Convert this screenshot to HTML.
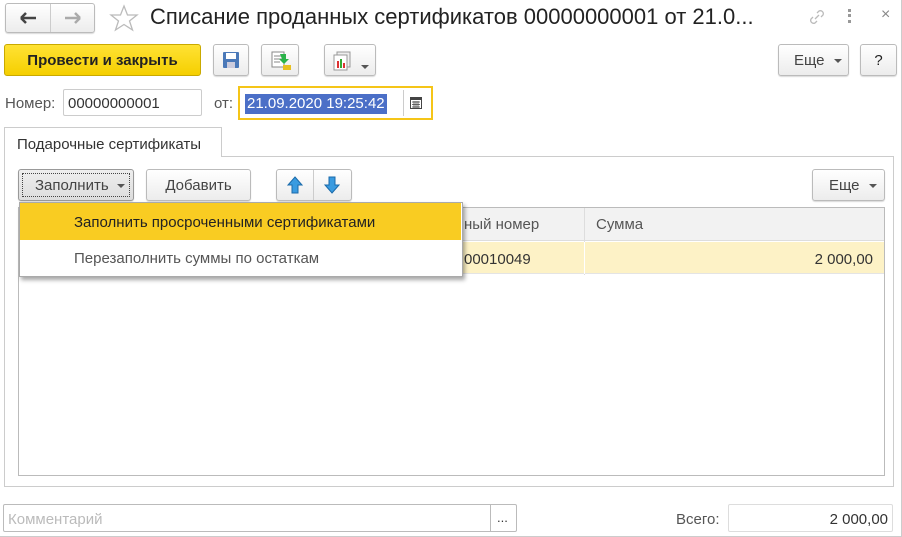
<!DOCTYPE html>
<html><head><meta charset="utf-8"><style>
*{box-sizing:border-box;margin:0;padding:0}
body{width:902px;height:537px;background:#fff;font-family:"Liberation Sans",Arial,sans-serif;position:relative;overflow:hidden;color:#333;font-size:14px}
.a{position:absolute}
.btn{position:absolute;border:1px solid #bbb;border-radius:3px;background:linear-gradient(#fff,#ececec);box-shadow:0 1px 1px rgba(0,0,0,.15);}
.tri{display:inline-block;width:0;height:0;border-left:4px solid transparent;border-right:4px solid transparent;border-top:4px solid #555;vertical-align:middle}
</style></head><body>
<div class="a" style="left:0;top:0;width:902px;height:537px;border-right:1px solid #ccc;border-bottom:1px solid #ccc"></div>
<!-- nav -->
<div class="btn" style="left:5px;top:3px;width:90px;height:30px"></div>
<div class="a" style="left:50px;top:4px;width:1px;height:28px;background:#ccc"></div>
<svg class="a" style="left:19px;top:11px" width="18" height="14"><path d="M2 7H17M2 7L7 2M2 7L7 12" stroke="#444" stroke-width="2.5" fill="none"/></svg>
<svg class="a" style="left:64px;top:11px" width="18" height="14"><path d="M16 7H1M16 7L11 2M16 7L11 12" stroke="#aaa" stroke-width="2.5" fill="none"/></svg>
<svg class="a" style="left:109px;top:4px" width="30" height="28"><polygon points="15,2 18.5,11 28,11 20.5,17 23.5,26 15,20.5 6.5,26 9.5,17 2,11 11.5,11" fill="none" stroke="#bbb" stroke-width="1.3"/></svg>
<div class="a" style="left:150px;top:4px;font-size:22px;color:#222;white-space:nowrap">Списание проданных сертификатов 00000000001 от 21.0...</div>
<svg class="a" style="left:808px;top:8px" width="18" height="18"><path d="M7 11L11 7M5 9L3 11a3 3 0 0 0 4 4l2-2M13 9l2-2a3 3 0 0 0-4-4L9 5" stroke="#bbb" stroke-width="1.3" fill="none"/></svg>
<div class="a" style="left:848px;top:9px;width:3px;height:14px;border-left:3px dotted #999"></div>
<div class="a" style="left:881px;top:6px;font-size:16px;color:#888">×</div>
<!-- toolbar -->
<div class="a" style="left:4px;top:44px;width:197px;height:32px;background:linear-gradient(#ffe234,#f5cf00);border:1px solid #c9a900;border-radius:3px;font-weight:bold;font-size:15px;color:#222;text-align:center;line-height:31px">Провести и закрыть</div>
<div class="btn" style="left:213px;top:44px;width:36px;height:32px"></div>
<svg class="a" style="left:222px;top:51px" width="18" height="18"><rect x="1" y="1" width="16" height="16" rx="1" fill="#4a78b8"/><rect x="4" y="2" width="10" height="6" fill="#fff"/><rect x="5" y="11" width="8" height="6" fill="#ccd"/></svg>
<div class="btn" style="left:261px;top:44px;width:38px;height:32px"></div>
<svg class="a" style="left:270px;top:50px" width="22" height="22"><rect x="2" y="2" width="12" height="15" fill="#fff" stroke="#888"/><path d="M4 6h8M4 9h8M4 12h6" stroke="#888"/><path d="M10 4h6v5h3l-5 5-5-5h3z" fill="#2bb34a"/><ellipse cx="17" cy="17" rx="4" ry="2" fill="#e8c020"/><rect x="13" y="15" width="8" height="5" fill="#e8c020"/></svg>
<div class="btn" style="left:324px;top:44px;width:52px;height:32px"></div>
<svg class="a" style="left:332px;top:51px" width="22" height="20"><rect x="5" y="1" width="13" height="15" fill="#eee" stroke="#999"/><rect x="2" y="4" width="13" height="15" fill="#fff" stroke="#999"/><rect x="5" y="10" width="2" height="7" fill="#d33"/><rect x="8" y="8" width="2" height="9" fill="#3a3"/><rect x="11" y="12" width="2" height="5" fill="#d33"/></svg>
<div class="a" style="left:361px;top:58px"><span class="tri"></span></div>
<div class="btn" style="left:778px;top:44px;width:71px;height:32px;line-height:32px;padding-left:15px;font-size:15px;color:#444">Еще <span class="tri" style="margin-left:5px"></span></div>
<div class="btn" style="left:860px;top:44px;width:37px;height:32px;text-align:center;line-height:32px;font-size:15px;color:#222">?</div>
<!-- fields -->
<div class="a" style="left:5px;top:95px;font-size:15px;color:#555">Номер:</div>
<div class="a" style="left:63px;top:89px;width:139px;height:27px;border:1px solid #ccc;border-radius:2px;padding:5px 4px;font-size:15px;color:#333">00000000001</div>
<div class="a" style="left:214px;top:95px;font-size:15px;color:#555">от:</div>
<div class="a" style="left:238px;top:86px;width:195px;height:34px;border:2px solid #f5c518"></div>
<div class="a" style="left:245px;top:94px;background:#4b6fc7;color:#fff;font-size:15px;padding:0 2px;line-height:20px">21.09.2020 19:25:42</div>
<div class="a" style="left:403px;top:90px;width:1px;height:26px;background:#ccc"></div>
<svg class="a" style="left:410px;top:96px" width="12" height="13"><rect x="0.5" y="1.5" width="11" height="11" fill="none" stroke="#444"/><rect x="0" y="1" width="12" height="3" fill="#444"/><path d="M2 6h8M2 8.5h8M2 11h8M4 5v7M6 5v7M8 5v7" stroke="#444" stroke-width=".8"/></svg>
<!-- tab -->
<div class="a" style="left:4px;top:156px;width:890px;height:331px;border:1px solid #ccc"></div>
<div class="a" style="left:4px;top:127px;width:218px;height:30px;border:1px solid #ccc;border-bottom:none;background:#fff;padding:8px 12px 0;font-size:15px;color:#333">Подарочные сертификаты</div>
<div class="btn" style="left:18px;top:169px;width:116px;height:32px;background:linear-gradient(#eee,#ddd);border-color:#999"></div>
<div class="a" style="left:22px;top:173px;width:108px;height:24px;border:1px dotted #444;line-height:24px;padding-left:12px;font-size:15px;color:#444">Заполнить <span class="tri" style="margin-left:4px"></span></div>
<div class="btn" style="left:146px;top:169px;width:105px;height:32px;text-align:center;line-height:32px;font-size:15px;color:#444">Добавить</div>
<div class="btn" style="left:276px;top:169px;width:76px;height:32px"></div>
<div class="a" style="left:313px;top:170px;width:1px;height:30px;background:#ccc"></div>
<svg class="a" style="left:287px;top:176px" width="16" height="18"><path d="M8 1L15 9H11V17H5V9H1Z" fill="#3a9be0" stroke="#1a6aaa"/></svg>
<svg class="a" style="left:324px;top:176px" width="16" height="18"><path d="M8 17L15 9H11V1H5V9H1Z" fill="#3a9be0" stroke="#1a6aaa"/></svg>
<div class="btn" style="left:812px;top:169px;width:73px;height:32px;line-height:32px;padding-left:16px;font-size:15px;color:#444">Еще <span class="tri" style="margin-left:5px"></span></div>
<!-- table -->
<div class="a" style="left:18px;top:207px;width:867px;height:269px;border:1px solid #bbb"></div>
<div class="a" style="left:19px;top:208px;width:865px;height:33px;background:#f2f2f2;border-bottom:1px solid #ddd"></div>
<div class="a" style="left:584px;top:208px;width:1px;height:67px;background:#ddd"></div>
<div class="a" style="left:464px;top:216px;font-size:15px;color:#555">ный номер</div>
<div class="a" style="left:596px;top:216px;font-size:15px;color:#555">Сумма</div>
<div class="a" style="left:19px;top:242px;width:865px;height:32px;background:#fdf2c6;border-bottom:1px solid #e4e4e4"></div>
<div class="a" style="left:584px;top:242px;width:1px;height:32px;background:#fff"></div>
<div class="a" style="left:464px;top:251px;font-size:15px;color:#333">00010049</div>
<div class="a" style="left:700px;top:251px;width:173px;text-align:right;font-size:15px;color:#333">2 000,00</div>
<!-- dropdown -->
<div class="a" style="left:19px;top:202px;width:444px;height:75px;background:#fff;border:1px solid #aaa;box-shadow:2px 3px 4px rgba(0,0,0,.35)"></div>
<div class="a" style="left:20px;top:203px;width:441px;height:37px;background:#f9cc22"></div>
<div class="a" style="left:74px;top:214px;font-size:15px;color:#222">Заполнить просроченными сертификатами</div>
<div class="a" style="left:74px;top:250px;font-size:15px;color:#555">Перезаполнить суммы по остаткам</div>
<!-- bottom -->
<div class="a" style="left:3px;top:504px;width:514px;height:28px;border:1px solid #bbb;border-radius:2px"></div>
<div class="a" style="left:490px;top:505px;width:1px;height:26px;background:#bbb"></div>
<div class="a" style="left:8px;top:511px;font-size:15px;color:#bbb">Комментарий</div>
<div class="a" style="left:497px;top:510px;font-size:13px;color:#333">...</div>
<div class="a" style="left:676px;top:511px;font-size:15px;color:#555">Всего:</div>
<div class="a" style="left:728px;top:504px;width:165px;height:28px;border:1px solid #ddd;border-radius:2px;text-align:right;padding:6px 4px;font-size:15px;color:#333">2 000,00</div>
</body></html>
